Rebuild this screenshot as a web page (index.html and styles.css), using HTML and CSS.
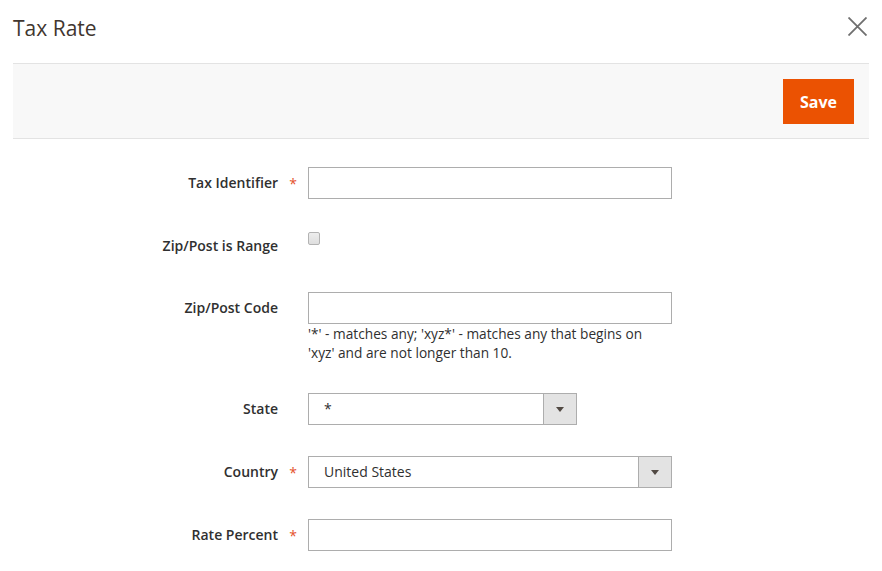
FILE: index.html
```html
<!DOCTYPE html>
<html lang="en">
<head>
<meta charset="utf-8">
<title>Tax Rate</title>
<link rel="stylesheet" href="styles.css">
</head>
<body>
<div class="modal">
  <header class="modal-header">
    <h1 class="modal-title">Tax Rate</h1>
    <button class="close" type="button" aria-label="Close">
      <svg width="19" height="19" viewBox="0 0 19 19"><path d="M0.5 0.5 L18.5 18.5 M18.5 0.5 L0.5 18.5" stroke="#6f6f6f" stroke-width="1.8" fill="none"/></svg>
    </button>
  </header>
  <div class="actions">
    <button class="save" type="button">Save</button>
  </div>
  <form class="form">
    <label class="label">Tax Identifier</label>
    <span class="req">*</span>
    <div class="control"><input class="input" type="text"></div>

    <label class="label label-check">Zip/Post is Range</label>
    <span class="req"></span>
    <div class="control"><span class="checkbox"></span></div>

    <label class="label">Zip/Post Code</label>
    <span class="req"></span>
    <div class="control">
      <input class="input" type="text">
      <div class="note">'*' - matches any; 'xyz*' - matches any that begins on 'xyz' and are not longer than 10.</div>
    </div>

    <label class="label">State</label>
    <span class="req"></span>
    <div class="control"><div class="select short"><span class="value">*</span><span class="arrow"></span></div></div>

    <label class="label">Country</label>
    <span class="req">*</span>
    <div class="control"><div class="select"><span class="value">United States</span><span class="arrow"></span></div></div>

    <label class="label">Rate Percent</label>
    <span class="req">*</span>
    <div class="control"><input class="input" type="text"></div>
  </form>
</div>
</body>
</html>
```
FILE: styles.css
```css
* { box-sizing: border-box; }
body {
  margin: 0;
  background: #fff;
  font-family: "Open Sans", "Liberation Sans", sans-serif;
  color: #303030;
}
.modal { padding: 0 13px; }
.modal-header {
  height: 63px;
  display: flex;
  justify-content: space-between;
  align-items: flex-start;
}
.modal-title {
  margin: 15px 0 0 0;
  font-size: 21px;
  line-height: 26px;
  font-weight: 400;
  color: #41362f;
}
.close {
  margin: 17px 2px 0 0;
  padding: 0;
  border: 0;
  background: none;
  width: 19px;
  height: 19px;
  display: block;
}
.close svg { display: block; }
.actions {
  background: #f8f8f8;
  border-top: 1px solid #e3e3e3;
  border-bottom: 1px solid #e3e3e3;
  padding: 15px 15px 14px;
  display: flex;
  justify-content: flex-end;
}
.save {
  height: 45px;
  padding: 0 17px;
  border: 0;
  background: #eb5202;
  color: #fff;
  font-family: "Open Sans", "Liberation Sans", sans-serif;
  font-weight: 700;
  font-size: 16px;
  width: 71px;
}
.form {
  margin-top: 28px;
  display: grid;
  grid-template-columns: 265px 30px 1fr;
  row-gap: 31px;
  align-items: start;
}
.label {
  text-align: right;
  font-size: 14px;
  font-weight: 600;
  line-height: 32px;
  color: #303030;
}
.label-check { line-height: 31px; }
.req {
  text-align: center;
  color: #e4512a;
  font-size: 14px;
  padding-top: 2px;
  line-height: 30px;
  font-weight: 400;
}
.control { width: 364px; }
.input {
  display: block;
  width: 364px;
  height: 32px;
  border: 1px solid #adadad;
  background: #fff;
  margin: 0;
  padding: 0 10px;
  font-family: inherit;
  font-size: 14px;
}
.checkbox {
  display: block;
  margin-top: 2px;
  width: 12px;
  height: 13px;
  border: 1px solid #b3b3b3;
  border-radius: 2px;
  background: linear-gradient(#eeeeee, #dedede);
}
.note {
  font-size: 13.7px;
  line-height: 19px;
  color: #303030;
}
.select {
  display: flex;
  width: 364px;
  height: 32px;
  border: 1px solid #adadad;
  background: #fff;
}
.select.short { width: 269px; }
.select .value {
  flex: 1;
  padding-left: 15px;
  font-size: 14px;
  line-height: 30px;
  color: #303030;
}
.select .arrow {
  width: 33px;
  border-left: 1px solid #adadad;
  background: #e3e3e3;
  display: flex;
  align-items: center;
  justify-content: center;
}
.select .arrow::before {
  content: "";
  width: 0;
  height: 0;
  border-left: 4px solid transparent;
  border-right: 4px solid transparent;
  border-top: 5px solid #514943;
  margin-top: 1px;
}
```
